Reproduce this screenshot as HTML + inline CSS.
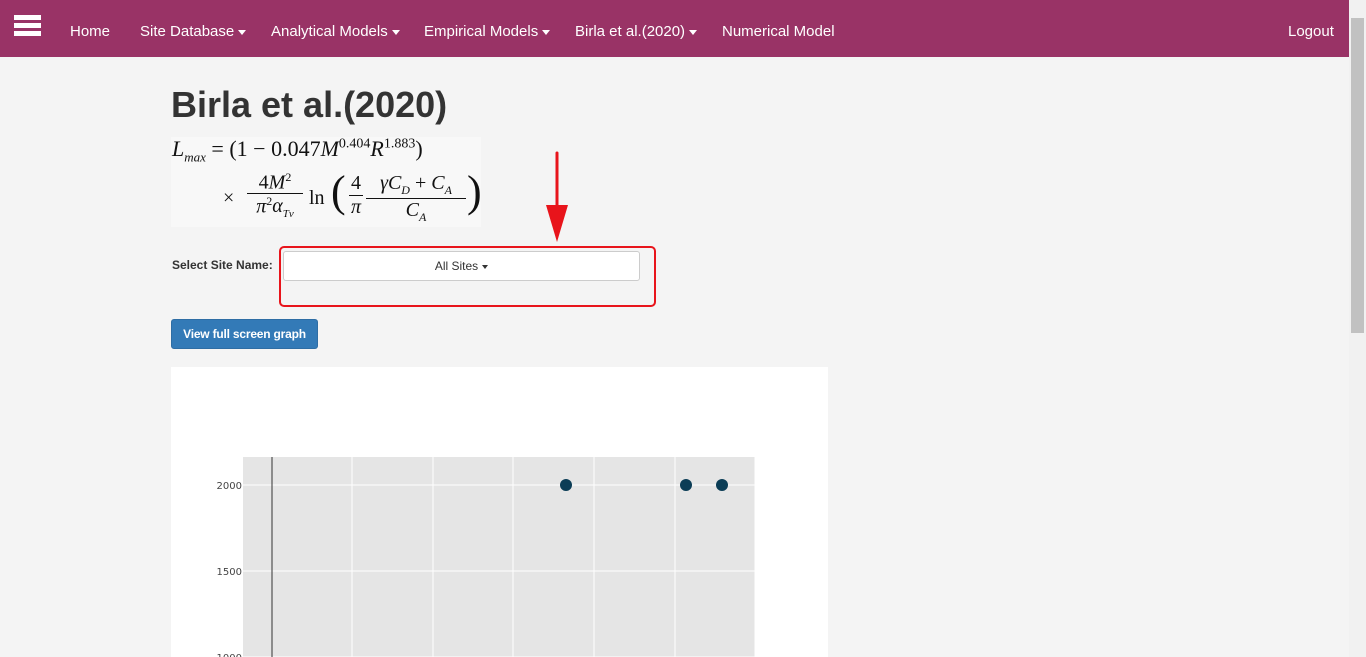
<!DOCTYPE html>
<html><head><style>
*{box-sizing:border-box}
body{margin:0;width:1366px;height:657px;overflow:hidden;background:#f4f4f4;font-family:"Liberation Sans",Arial,sans-serif;position:relative}
.nav{position:absolute;left:0;top:0;width:1349px;height:57px;background:#993366;color:#fff;font-size:15px}
.nav span{position:absolute;top:23px}
.car{display:inline-block;border-left:4px solid transparent;border-right:4px solid transparent;border-top:5px solid #fff;vertical-align:middle;margin-left:4px}
.sb{position:absolute;right:0;top:0;width:17px;height:657px;background:#f1f1f1}
.sb div{position:absolute;left:2px;top:18px;width:13px;height:315px;background:#c1c1c1}
h1{position:absolute;left:171px;top:84px;margin:0;font-size:36px;font-weight:bold;color:#333}
.math{position:absolute;left:171px;top:137px;width:310px;height:90px;background:#f8f8f8;font-family:"Liberation Serif",serif;font-size:20px;color:#111}
.math i{font-style:italic}
</style></head><body>
<div class="nav">
<div style="position:absolute;left:14px;top:15px;width:27px;height:5px;background:#fff"></div>
<div style="position:absolute;left:14px;top:23px;width:27px;height:5px;background:#fff"></div>
<div style="position:absolute;left:14px;top:31px;width:27px;height:5px;background:#fff"></div>
<span style="left:70px">Home</span>
<span style="left:140px">Site Database<i class="car"></i></span>
<span style="left:271px">Analytical Models<i class="car"></i></span>
<span style="left:424px">Empirical Models<i class="car"></i></span>
<span style="left:575px">Birla et al.(2020)<i class="car"></i></span>
<span style="left:722px">Numerical Model</span>
<span style="left:1288px">Logout</span>
</div>
<div class="sb"><div></div></div>
<h1>Birla et al.(2020)</h1>
<div class="math">
<div style="position:absolute;left:1px;top:-1px;font-size:22px;white-space:nowrap"><i>L<sub style="font-size:13px">max</sub></i> = (1 − 0.047<i>M</i><sup style="font-size:14px">0.404</sup><i>R</i><sup style="font-size:14px">1.883</sup>)</div>
<div style="position:absolute;left:52px;top:50px">×</div>
<div style="position:absolute;left:76px;top:33px;text-align:center;width:56px"><div>4<i>M</i><sup style="font-size:12px">2</sup></div><div style="border-top:1px solid #111;margin-top:-2px"><i>π</i><sup style="font-size:12px">2</sup><i>α<sub style="font-size:11px">Tv</sub></i></div></div>
<div style="position:absolute;left:138px;top:50px">ln</div>
<div style="position:absolute;left:160px;top:30px;font-size:44px;line-height:50px">(</div>
<div style="position:absolute;left:178px;top:35px;width:14px;text-align:center"><div>4</div><div style="border-top:1px solid #111"><i>π</i></div></div>
<div style="position:absolute;left:195px;top:35px;width:100px;text-align:center"><div><i>γC<sub style="font-size:12px">D</sub></i> + <i>C<sub style="font-size:12px">A</sub></i></div><div style="border-top:1px solid #111"><i>C<sub style="font-size:12px">A</sub></i></div></div>
<div style="position:absolute;left:296px;top:30px;font-size:44px;line-height:50px">)</div>
</div>
<div style="position:absolute;left:172px;top:258px;font-size:12px;font-weight:bold;color:#333">Select Site Name:</div>
<div style="position:absolute;left:283px;top:251px;width:357px;height:30px;background:#fff;border:1px solid #ccc;border-radius:3px;font-size:12px;text-align:center;line-height:28px;color:#333">All Sites<i class="car" style="border-top-color:#333;border-left-width:3px;border-right-width:3px;border-top-width:4px"></i></div>
<div style="position:absolute;left:279px;top:246px;width:377px;height:61px;border:2px solid #e8141b;border-radius:5px"></div>
<svg style="position:absolute;left:540px;top:150px" width="35" height="95"><line x1="17" y1="3" x2="17" y2="60" stroke="#e8141b" stroke-width="3" stroke-linecap="round"/><polygon points="6,55 28,55 17,92" fill="#e8141b"/></svg>
<div style="position:absolute;left:171px;top:319px;width:147px;height:30px;background:#337ab7;border:1px solid #2e6da4;border-radius:3px;color:#fff;font-size:12px;font-weight:bold;text-align:center;line-height:28px;letter-spacing:-0.2px">View full screen graph</div>
<svg style="position:absolute;left:171px;top:367px" width="657" height="290">
<rect width="657" height="290" fill="#fff"/>
<rect x="72" y="90" width="512" height="200" fill="#e5e5e5"/>
<g stroke="#fff" stroke-width="1">
<line x1="181" y1="90" x2="181" y2="290"/><line x1="262" y1="90" x2="262" y2="290"/><line x1="342" y1="90" x2="342" y2="290"/><line x1="423" y1="90" x2="423" y2="290"/><line x1="504" y1="90" x2="504" y2="290"/><line x1="584" y1="90" x2="584" y2="290"/>
<line x1="72" y1="118" x2="584" y2="118"/><line x1="72" y1="204" x2="584" y2="204"/><line x1="72" y1="290" x2="584" y2="290"/>
</g>
<line x1="101" y1="90" x2="101" y2="290" stroke="#333"/>
<g fill="#0b3d56"><circle cx="395" cy="118" r="6"/><circle cx="515" cy="118" r="6"/><circle cx="551" cy="118" r="6"/></g>
<g font-size="10" fill="#444" text-anchor="end" font-family="DejaVu Sans,sans-serif"><text x="71" y="122">2000</text><text x="71" y="208">1500</text><text x="71" y="294">1000</text></g>
</svg>
</body></html>
